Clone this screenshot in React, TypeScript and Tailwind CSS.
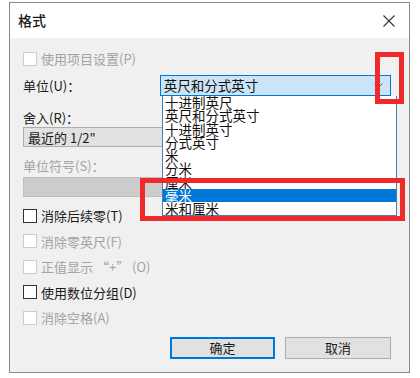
const font = "font-['Noto_Sans_CJK_SC','Noto_Sans',sans-serif]";

const units = ['十进制英尺', '英尺和分式英寸', '十进制英寸', '分式英寸', '米', '分米', '厘米', '毫米', '米和厘米'];

const CheckRow = ({ label, enabled = false }: { label: string; enabled?: boolean }) => (
  <div className="flex items-center h-[25.5px]">
    <div className={`w-[14px] h-[14px] bg-white border ${enabled ? 'border-[#333333]' : 'border-[#cccccc]'}`} />
    <span className={`ml-[4px] text-[13px] leading-none ${enabled ? 'text-[#1a1a1a]' : 'text-[#a3a3a3]'}`}>{label}</span>
  </div>
);

export default function App() {
  return (
    <div className={`relative w-[420px] h-[378px] bg-white overflow-hidden ${font}`}>
      {/* dialog */}
      <div className="ml-[9px] mt-[2px] w-[401px] h-[371px] border border-[#8a8a8a] flex flex-col">
        <div className="h-[35px] bg-white flex items-center justify-between pl-[8px] pr-[14px] shrink-0">
          <span className="text-[14px] font-medium text-[#1a1a1a]">格式</span>
          <svg width="12" height="12" viewBox="0 0 12 12">
            <path d="M0.5 0.5 L11.5 11.5 M11.5 0.5 L0.5 11.5" stroke="#333" strokeWidth="1.1" />
          </svg>
        </div>

        <div className="flex-1 bg-[#f0f0f0] pl-[13px] pr-[18px] flex flex-col">
          <div className="mt-[12px] h-[17px] flex items-center">
            <div className="w-[14px] h-[14px] bg-white border border-[#cccccc]" />
            <span className="ml-[4px] text-[13px] leading-none text-[#a3a3a3]">使用项目设置(P)</span>
          </div>

          <div className="mt-[8px] h-[21px] flex items-center">
            <span className="w-[139px] text-[13px] leading-none text-[#1a1a1a]">单位(U)：</span>
            <div className="w-[235px] h-[21px] bg-[#cce4f7] border border-[#0078d7] flex items-center justify-between pl-[3px] pr-[7px]">
              <span className="text-[13.5px] leading-none text-[#111]">英尺和分式英寸</span>
              <svg width="9" height="5" viewBox="0 0 9 5">
                <path d="M0.5 0.5 L4.5 4.5 L8.5 0.5" stroke="#606060" strokeWidth="1" fill="none" />
              </svg>
            </div>
          </div>

          <div className="mt-[12px] h-[18px] flex items-center">
            <span className="text-[13px] leading-none text-[#1a1a1a]">舍入(R)：</span>
          </div>
          <div className="mt-[1px] w-[227px] h-[20px] bg-[#e1e1e1] border border-[#adadad] flex items-center pl-[4px]">
            <span className="text-[13px] leading-none text-[#1a1a1a]">最近的 1/2"</span>
          </div>

          <div className="mt-[9px] h-[18px] flex items-center">
            <span className="text-[13px] leading-none text-[#a3a3a3]">单位符号(S)：</span>
          </div>
          <div className="mt-[3px] w-[227px] h-[20px] bg-[#cccccc] border border-[#bfbfbf]" />

          <div className="mt-[6px] flex flex-col">
            <CheckRow label="消除后续零(T)" enabled />
            <CheckRow label="消除零英尺(F)" />
            <CheckRow label="正值显示 “+” (O)" />
            <CheckRow label="使用数位分组(D)" enabled />
            <CheckRow label="消除空格(A)" />
          </div>

          <div className="mt-[6px] flex justify-end gap-[10px]">
            <button className="w-[105px] h-[22px] bg-[#e1e1e1] border border-[#0078d7] shadow-[inset_0_0_0_1px_#0078d7] text-[13px] leading-none text-[#1a1a1a]">确定</button>
            <button className="w-[106px] h-[22px] bg-[#e1e1e1] border border-[#adadad] text-[13px] leading-none text-[#1a1a1a]">取消</button>
          </div>
        </div>
      </div>

      {/* open dropdown list */}
      <div className="absolute left-[162px] top-[96px] w-[235px] h-[120px] bg-white border border-[#4a7fb0] border-t-0 flex flex-col">
        {units.map(u => (
          <div
            key={u}
            className={`h-[13.3px] pl-[2px] text-[13.5px] leading-[13.3px] whitespace-nowrap ${u === '毫米' ? 'bg-[#0078d7] text-white' : 'text-[#111]'}`}
          >
            {u}
          </div>
        ))}
      </div>

      {/* red annotation boxes */}
      <div className="absolute left-[375px] top-[52px] w-[29px] h-[52px] border-[5px] border-[#ee2a2a]" />
      <div className="absolute left-[140px] top-[178px] w-[265px] h-[43px] border-[5px] border-[#ee2a2a]" />
    </div>
  );
}
